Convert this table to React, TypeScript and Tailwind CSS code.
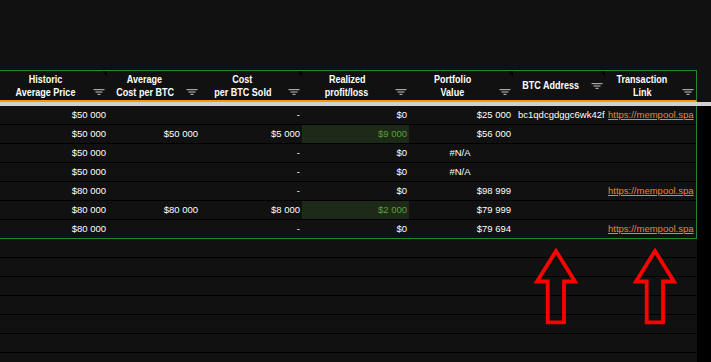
import React from "react";

type H = { lines: string[]; w: string; corner?: boolean; single?: boolean };

const headers: H[] = [
  { lines: ["Historic", "Average Price"], w: "w-[107px]", corner: true },
  { lines: ["Average", "Cost per BTC"], w: "w-[93px]" },
  { lines: ["Cost", "per BTC Sold"], w: "w-[102px]", corner: true },
  { lines: ["Realized", "profit/loss"], w: "w-[107px]" },
  { lines: ["Portfolio", "Value"], w: "w-[104px]", corner: true },
  { lines: ["BTC Address"], w: "w-[92px]", corner: true, single: true },
  { lines: ["Transaction", "Link"], w: "w-[91px]" },
];

type Row = {
  a: string;
  b: string;
  c: string;
  d: string;
  green?: boolean;
  e: string;
  f: string;
  link: boolean;
};

const rows: Row[] = [
  { a: "$50 000", b: "", c: "-", d: "$0", e: "$25 000", f: "bc1qdcgdggc6wk42f", link: true },
  { a: "$50 000", b: "$50 000", c: "$5 000", d: "$9 000", green: true, e: "$56 000", f: "", link: false },
  { a: "$50 000", b: "", c: "-", d: "$0", e: "#N/A", f: "", link: false },
  { a: "$50 000", b: "", c: "-", d: "$0", e: "#N/A", f: "", link: false },
  { a: "$80 000", b: "", c: "-", d: "$0", e: "$98 999", f: "", link: true },
  { a: "$80 000", b: "$80 000", c: "$8 000", d: "$2 000", green: true, e: "$79 999", f: "", link: false },
  { a: "$80 000", b: "", c: "-", d: "$0", e: "$79 694", f: "", link: true },
];

function FilterIcon() {
  return (
    <svg width="12" height="6" viewBox="0 0 12 6" className="block">
      <rect x="0.5" y="0" width="11" height="1.2" fill="#a8a8a8" />
      <rect x="2.5" y="2.4" width="7" height="1.2" fill="#a8a8a8" />
      <rect x="4.5" y="4.8" width="3" height="1.2" fill="#a8a8a8" />
    </svg>
  );
}

function HeaderCell({ h }: { h: H }) {
  return (
    <div className={`${h.w} relative flex h-full shrink-0`}>
      <div className="flex flex-1 flex-col items-center justify-center text-[11px] font-bold leading-[12.5px] text-white whitespace-nowrap">
        {h.lines.map((l) => (
          <div key={l} className="scale-x-[0.82]">
            {l}
          </div>
        ))}
      </div>
      <div className={`flex w-[17px] justify-end pr-[2px] ${h.single ? "items-center" : "items-end pb-[5px]"}`}>
        <FilterIcon />
      </div>
      {h.corner && (
        <div className="absolute right-0 top-0 h-0 w-0 border-l-[5px] border-t-[5px] border-l-transparent border-t-black" />
      )}
    </div>
  );
}

function DataRow({ r, last }: { r: Row; last: boolean }) {
  return (
    <div className={`flex ${last ? "h-[18px]" : "h-[19px] border-b border-black"} text-[9.5px] text-white whitespace-nowrap`}>
      <div className="flex w-[107px] shrink-0 items-center justify-end pr-[1px]">{r.a}</div>
      <div className="flex w-[93px] shrink-0 items-center justify-end pr-[2px]">{r.b}</div>
      <div className="flex w-[102px] shrink-0 items-center justify-end pr-[2px]">{r.c}</div>
      <div
        className={`flex w-[107px] shrink-0 items-center justify-end pr-[2px] ${r.green ? "bg-[#1c2a17] text-[#5f9e3e]" : ""}`}
      >
        {r.d}
      </div>
      <div className={`flex w-[104px] shrink-0 items-center pr-[2px] ${r.e === "#N/A" ? "justify-center" : "justify-end"}`}>
        {r.e}
      </div>
      <div className="flex w-[92px] shrink-0 items-center overflow-hidden pl-[5px]">{r.f}</div>
      <div className="flex w-[91px] shrink-0 items-center pl-[3px]">
        {r.link && <span className="text-[#ec8531] underline">https://mempool.spa</span>}
      </div>
    </div>
  );
}

export default function App() {
  return (
    <div className="relative h-[362px] w-[711px] overflow-hidden bg-[#111111] font-['Liberation_Sans',Arial,sans-serif]">
      <div className="h-[70px]" />
      <div className="flex">
        <div className="flex h-[32px] w-[697px] border-r border-t border-b-2 border-[#23892f] border-b-[#ff9900]">
          {headers.map((h) => (
            <HeaderCell key={h.lines.join()} h={h} />
          ))}
        </div>
      </div>
      <div className="h-[4px] bg-[#d0d0d0]" />
      <div className="flex h-full">
        <div className="w-[697px] shrink-0">
          <div className="border-b border-r border-[#23892f]">
            {rows.map((r, i) => (
              <DataRow key={i} r={r} last={i === rows.length - 1} />
            ))}
          </div>
          {Array.from({ length: 7 }).map((_, i) => (
            <div key={i} className="h-[19px] w-[696px] border-b border-black" />
          ))}
        </div>
        <div className="flex-1 bg-black" />
      </div>
      <svg
        className="pointer-events-none absolute left-0 top-0"
        width="711"
        height="362"
        viewBox="0 0 711 362"
      >
        <path
          d="M556 251 L575 281.5 L564 281.5 L564 322.3 L547.7 322.3 L547.7 281.5 L537 281.5 Z"
          fill="none"
          stroke="#ff0000"
          strokeWidth="3.8"
          strokeLinejoin="miter"
        />
        <path
          d="M655 251 L674 281.5 L663 281.5 L663 322.3 L646.7 322.3 L646.7 281.5 L636 281.5 Z"
          fill="none"
          stroke="#ff0000"
          strokeWidth="3.8"
          strokeLinejoin="miter"
        />
      </svg>
    </div>
  );
}
